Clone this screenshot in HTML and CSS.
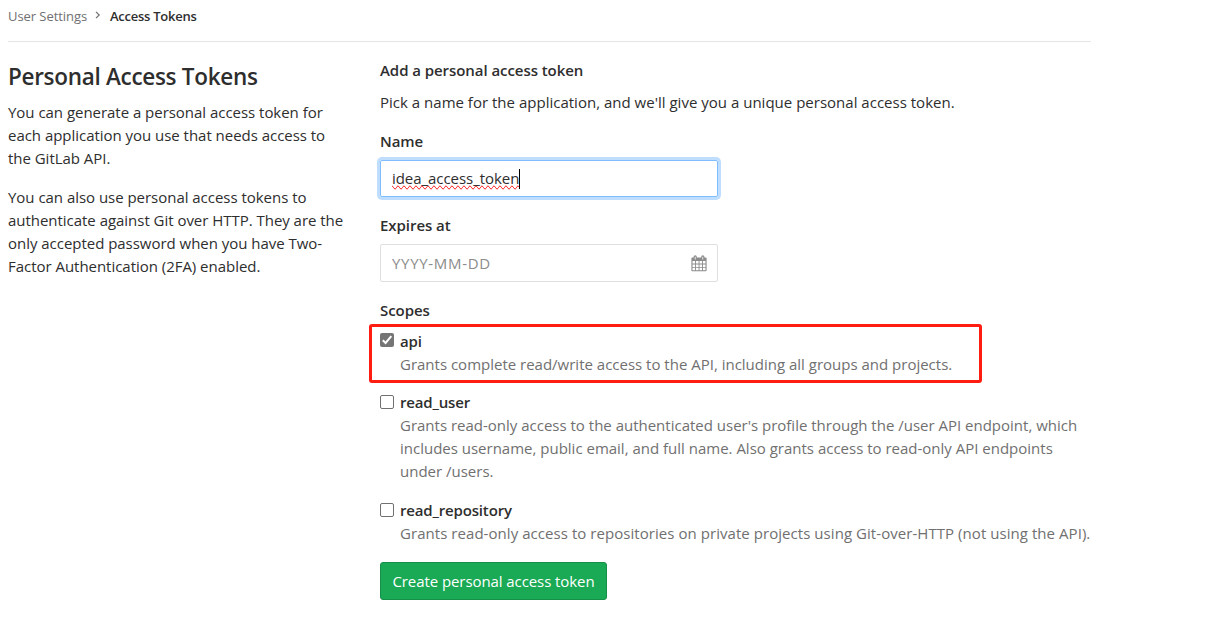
FILE: index.html
```html
<!DOCTYPE html>
<html lang="en">
<head>
<meta charset="utf-8">
<title>Access Tokens</title>
<link rel="stylesheet" href="styles.css">
</head>
<body>
<main class="page">
  <nav class="breadcrumbs">
    <a class="crumb">User Settings</a>
    <svg class="chevron" width="6" height="8" viewBox="0 0 6 8"><path d="M1 .8 4.2 4 1 7.2" fill="none" stroke="#707070" stroke-width="1.2"/></svg>
    <span class="crumb-current">Access Tokens</span>
  </nav>
  <div class="columns">
    <section class="intro">
      <h1 class="title">Personal Access Tokens</h1>
      <p class="para">You can generate a personal access token for<br>each application you use that needs access to<br>the GitLab API.</p>
      <p class="para">You can also use personal access tokens to<br>authenticate against Git over HTTP. They are the<br>only accepted password when you have Two-<br>Factor Authentication (2FA) enabled.</p>
    </section>
    <form class="form">
      <h2 class="heading">Add a personal access token</h2>
      <p class="lead">Pick a name for the application, and we'll give you a unique personal access token.</p>
      <div class="label">Name</div>
      <div class="field focused"><span class="typed">idea_access_token</span><span class="caret"></span></div>
      <div class="label">Expires at</div>
      <div class="field date"><span class="placeholder">YYYY-MM-DD</span>
        <svg class="calendar" width="16" height="17" viewBox="0 0 16 17"><path fill="#8c8c8c" fill-rule="evenodd" d="M1.2 2.5H2.6V1.8Q2.6.3 4.2.3T5.8 1.8V2.5H10.2V1.8Q10.2.3 11.8.3T13.4 1.8V2.5H14.8Q15.6 2.5 15.6 3.3V15.4Q15.6 16.2 14.8 16.2H1.2Q.4 16.2.4 15.4V3.3Q.4 2.5 1.2 2.5ZM3.8 1.8V4.4H4.6V1.8ZM11.4 1.8V4.4H12.2V1.8ZM1.5 6.1V8.5H4.1V6.1ZM5 6.1V8.5H7.6V6.1ZM8.5 6.1V8.5H11.1V6.1ZM12 6.1V8.5H14.5V6.1ZM1.5 9.4V11.9H4.1V9.4ZM5 9.4V11.9H7.6V9.4ZM8.5 9.4V11.9H11.1V9.4ZM12 9.4V11.9H14.5V9.4ZM1.5 12.8V15.2H4.1V12.8ZM5 12.8V15.2H7.6V12.8ZM8.5 12.8V15.2H11.1V12.8ZM12 12.8V15.2H14.5V12.8Z"/></svg>
      </div>
      <div class="label">Scopes</div>
      <div class="scope scope-api">
        <span class="box checked"><svg width="14" height="14" viewBox="0 0 14 14"><path d="M2.8 7.2 5.6 10 11.3 3.1" fill="none" stroke="#fff" stroke-width="2"/></svg></span>
        <div class="scope-text"><div class="scope-name">api</div><div class="desc">Grants complete read/write access to the API, including all groups and projects.</div></div>
        <span class="highlight"></span>
      </div>
      <div class="scope">
        <span class="box"></span>
        <div class="scope-text"><div class="scope-name">read_user</div><div class="desc">Grants read-only access to the authenticated user's profile through the /user API endpoint, which<br>includes username, public email, and full name. Also grants access to read-only API endpoints<br>under /users.</div></div>
      </div>
      <div class="scope">
        <span class="box"></span>
        <div class="scope-text"><div class="scope-name">read_repository</div><div class="desc desc-repository">Grants read-only access to repositories on private projects using Git-over-HTTP (not using the API).</div></div>
      </div>
      <button class="submit" type="button">Create personal access token</button>
    </form>
  </div>
</main>
</body>
</html>
```
FILE: styles.css
```css
* { box-sizing: border-box; }
body {
  margin: 0;
  background: #fff;
  color: #2e2e2e;
  font: 15px/23px "Open Sans", "Noto Sans", sans-serif;
  white-space: nowrap;
}
.page { width: 1091px; padding-left: 8px; }
.breadcrumbs {
  display: flex;
  align-items: center;
  height: 42px;
  padding-bottom: 9px;
  border-bottom: 1px solid #e5e5e5;
  font-size: 13px;
}
.crumb { width: 79px; color: #707070; letter-spacing: -.06px; }
.chevron { margin: 0 9px 2px 8px; }
.crumb-current { font-weight: 600; letter-spacing: -.25px; }
.columns { display: grid; grid-template-columns: 372px 1fr; }
.intro { padding-top: 21px; letter-spacing: -.03px; }
.title { margin: 0 0 10px; font-size: 22.5px; line-height: 28px; font-weight: 600; letter-spacing: -.3px; }
.para { margin: 0 0 16px; }
.form { padding-top: 17px; }
.heading { margin: 0 0 9px; font-size: 15px; line-height: 23px; font-weight: 600; letter-spacing: -.06px; }
.lead { margin: 0 0 16px; letter-spacing: .01px; }
.label { font-weight: 600; letter-spacing: -.05px; }
.field {
  display: flex;
  align-items: center;
  width: 338px;
  height: 38px;
  margin: 7px 0 16px;
  padding: 0 10px 0 11px;
  border: 1px solid #dfdfdf;
  border-radius: 2px;
}
.focused {
  height: 37px;
  margin-bottom: 17px;
  border-color: #80bdff;
  box-shadow: 0 0 0 3px #bfdeff;
}
.typed { letter-spacing: -.05px; text-decoration: spelling-error; text-decoration-skip-ink: none; }
.caret { width: 1px; height: 20px; background: #000; }
.date { justify-content: space-between; margin-bottom: 17px; }
.placeholder { color: #8c8c8c; letter-spacing: .7px; }
.scope { display: flex; position: relative; gap: 6px; margin-bottom: 16px; }
.scope-api { margin: 8px 0 15px; }
.box {
  width: 14px;
  height: 14px;
  margin-top: 4px;
  border: 1px solid #707070;
  border-radius: 2px;
}
.checked { margin-top: 3px; border: 0; background: #757575; }
.checked svg { display: block; }
.scope-name { font-weight: 600; letter-spacing: -.16px; }
.desc { color: #707070; letter-spacing: -.003px; }
.desc-repository { letter-spacing: .054px; }
.highlight {
  position: absolute;
  top: -6px;
  left: -11px;
  width: 613px;
  height: 59px;
  border: 3px solid #ff1c10;
  border-radius: 3px;
}
.submit {
  display: block;
  width: 227px;
  height: 38px;
  margin-top: 17px;
  padding: 0;
  border: 1px solid #168f48;
  border-radius: 3px;
  background: #1aaa55;
  color: #fff;
  font: inherit;
  letter-spacing: -.08px;
}
```
